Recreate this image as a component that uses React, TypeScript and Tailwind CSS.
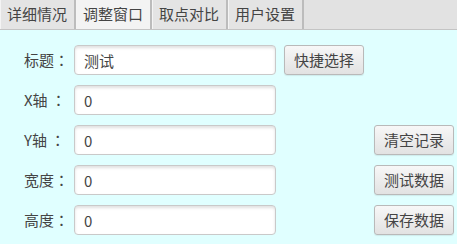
import React from "react";

const font = { fontFamily: '"Noto Sans CJK SC", "Noto Sans", sans-serif' };
const labelFont = { fontFamily: '"Noto Sans CJK JP", "Noto Sans CJK SC", sans-serif' };

const tabs = ["详细情况", "调整窗口", "取点对比", "用户设置"];

function Btn({ children }: { children: React.ReactNode }) {
  return (
    <button className="h-[30px] w-[80px] rounded-[3px] border border-[#b9b9b9] bg-gradient-to-b from-[#f7f7f7] to-[#e2e2e2] text-[15px] leading-[28px] text-[#444] shadow-[0_1px_1px_rgba(0,0,0,0.08)]">
      {children}
    </button>
  );
}

function Field({ value }: { value: string }) {
  return (
    <input
      readOnly
      value={value}
      className="h-[30px] w-[202px] rounded-[4px] border border-[#c9c9c9] bg-white px-[9px] text-[15px] text-[#444] shadow-[inset_0_2px_3px_rgba(0,0,0,0.12)] outline-none"
      style={font}
    />
  );
}

function Label({ children }: { children: React.ReactNode }) {
  return (
    <div className="flex h-[30px] items-center whitespace-nowrap text-[15px] text-[#444]" style={labelFont}>
      {children}
    </div>
  );
}

export default function App() {
  return (
    <div className="flex h-[244px] w-[457px] flex-col bg-[#e0ffff]" style={font}>
      <div className="flex h-[30px] border-b border-[#c4c4c4] bg-[#e2e2e2]">
        {tabs.map((t, i) => (
          <div
            key={t}
            className={
              "flex h-[29px] w-[76px] items-center justify-center border-r-2 border-r-[#bcbcbc] text-[15px] text-[#444] shadow-[inset_1px_0_0_#f4f4f4] " +
              (i === 1 ? "bg-[#f3f3f3]" : "bg-[#e4e4e4]")
            }
          >
            {t}
          </div>
        ))}
      </div>
      <div className="grid grid-cols-[42px_202px_80px_82px] grid-rows-[30px_30px_30px_30px_30px] gap-x-[8px] gap-y-[10px] pl-[24px] pt-[15px]">
        <Label>标题：</Label>
        <Field value="测试" />
        <Btn>快捷选择</Btn>
        <div />

        <Label>X轴 ：</Label>
        <Field value="0" />
        <div />
        <div />

        <Label>Y轴 ：</Label>
        <Field value="0" />
        <div />
        <div className="pl-[2px]">
          <Btn>清空记录</Btn>
        </div>

        <Label>宽度：</Label>
        <Field value="0" />
        <div />
        <div className="pl-[2px]">
          <Btn>测试数据</Btn>
        </div>

        <Label>高度：</Label>
        <Field value="0" />
        <div />
        <div className="pl-[2px]">
          <Btn>保存数据</Btn>
        </div>
      </div>
    </div>
  );
}
